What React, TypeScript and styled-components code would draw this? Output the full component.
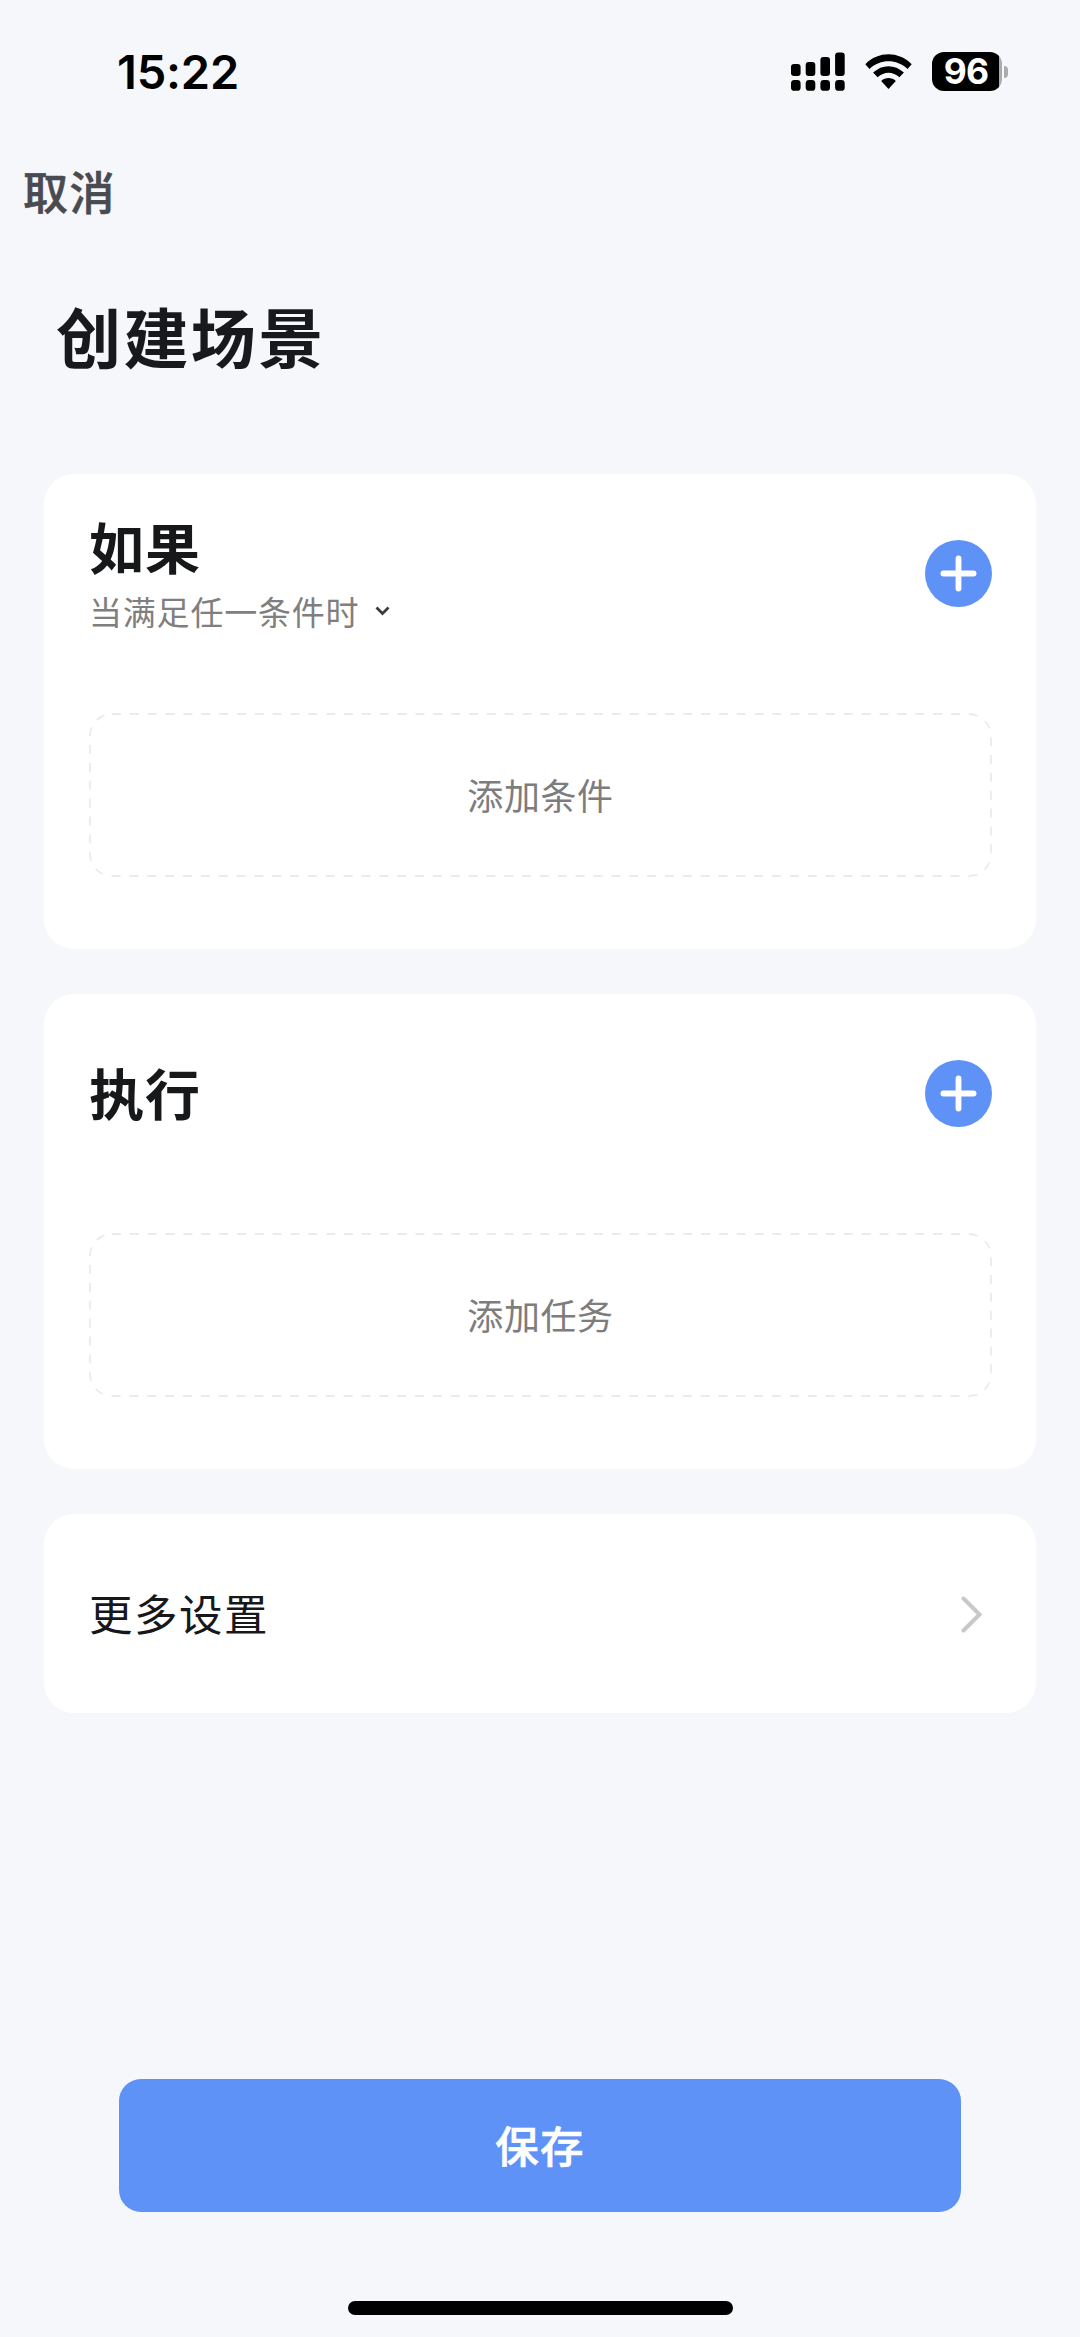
import React from "react";
import styled, { createGlobalStyle } from "styled-components";

const GlobalStyle = createGlobalStyle`
  * { box-sizing: border-box; }
  body {
    margin: 0;
    background: #f5f7fb;
    font-family: "Noto Sans CJK SC", "PingFang SC", sans-serif;
  }
  button { border: 0; padding: 0; background: none; font-family: inherit; }
  svg { display: block; }
`;

const Screen = styled.div`
  width: 1080px;
  height: 2337px;
  display: flex;
  flex-direction: column;
  background: #f5f7fb;
  overflow: hidden;
`;

const StatusBar = styled.header`
  height: 144px;
  padding: 0 72px 0 117px;
  display: flex;
  align-items: center;
  justify-content: space-between;
`;

const Clock = styled.span`
  font: 600 47px/56px Inter, sans-serif;
  letter-spacing: -0.2px;
  color: #000;
`;

const StatusIcons = styled.div`
  display: flex;
  align-items: center;
  gap: 20px;
  height: 39px;
  margin-bottom: 1px;
`;

const Battery = styled.div`
  display: flex;
  align-items: center;
  gap: 2px;
`;

const BatteryBody = styled.div`
  width: 70px;
  height: 39px;
  border-radius: 12px;
  background: linear-gradient(to right, #000 67px, #a9abaf 67px);
  color: #fff;
  font: 650 35.5px/40px Inter, sans-serif;
  letter-spacing: -0.8px;
  text-align: center;
  padding-right: 2px;
`;

const BatteryCap = styled.div`
  width: 4px;
  height: 12px;
  border-radius: 0 4px 4px 0;
  background: #a9abaf;
`;

const NavBar = styled.nav`
  height: 98px;
  padding: 0 23px 4px;
  display: flex;
  align-items: center;
`;

const CancelButton = styled.button`
  font-size: 45px;
  line-height: 60px;
  font-weight: 500;
  letter-spacing: 1.5px;
  color: #494b50;
  -webkit-text-stroke: 0.6px currentColor;
`;

const Title = styled.h1`
  margin: 0;
  height: 232px;
  padding: 48px 56px 0;
  font-size: 65px;
  line-height: 90px;
  font-weight: 700;
  letter-spacing: 2.4px;
  color: #17191d;
`;

const Cards = styled.main`
  padding: 0 44px;
  display: flex;
  flex-direction: column;
  gap: 45px;
`;

const Card = styled.section`
  height: 475px;
  padding: 0 44px 0 45px;
  border-radius: 30px;
  background: #fff;
`;

const CardHead = styled.div`
  height: 239px;
  padding-bottom: 41px;
  display: flex;
  align-items: center;
  justify-content: space-between;
`;

const CardTitle = styled.h2`
  margin: 0;
  padding-bottom: 4px;
  font-size: 55px;
  line-height: 68px;
  font-weight: 700;
  letter-spacing: 1px;
  color: #17181a;
`;

const ModePicker = styled.button`
  display: flex;
  align-items: center;
  gap: 16px;
  height: 56px;
  margin-bottom: -4px;
  font-size: 33px;
  line-height: 56px;
  letter-spacing: 0.8px;
  color: #7f7f80;
`;

const AddButton = styled.button`
  width: 67px;
  height: 67px;
  border-radius: 50%;
  background: #5f92f6;
  color: #fff;
`;

const EmptySlot = styled.button`
  position: relative;
  width: 903px;
  height: 164px;
  padding-bottom: 3px;
  display: flex;
  align-items: center;
  justify-content: center;
  font-size: 36px;
  line-height: 50px;
  letter-spacing: 0.6px;
  color: #7d7d7e;
`;

const DashedOutline = styled.svg`
  position: absolute;
  inset: 0;
`;

const SettingsRow = styled.button`
  height: 199px;
  padding: 1px 53px 0 45px;
  border-radius: 30px;
  background: #fff;
  display: flex;
  align-items: center;
  justify-content: space-between;
  font-size: 43.5px;
  line-height: 60px;
  letter-spacing: 1.5px;
  color: #17181a;
`;

const RowLabel = styled.span`
  padding-bottom: 2px;
`;

const Footer = styled.footer`
  margin-top: auto;
  display: flex;
  flex-direction: column;
  align-items: center;
  gap: 89px;
  padding-bottom: 22px;
`;

const SaveButton = styled.button`
  width: 842px;
  height: 133px;
  padding-bottom: 2px;
  border-radius: 22px;
  background: #5f92f6;
  color: #fff;
  font-size: 43.5px;
  line-height: 60px;
  font-weight: 500;
  letter-spacing: 1.2px;
  -webkit-text-stroke: 0.6px currentColor;
`;

const HomeIndicator = styled.div`
  width: 385px;
  height: 14px;
  border-radius: 7px;
  background: #000;
`;

const signalTops = [64, 62, 57, 52.5];

const Signal = () => (
  <svg width="54" height="39" viewBox="790 52 54 39">
    {signalTops.map((top, i) => (
      <React.Fragment key={top}>
        <rect x={790 + i * 14.7} y={top} width="9.6" height={76 - top} rx="3" />
        <rect x={790 + i * 14.7} y="80" width="9.6" height="10.8" rx="3.4" />
      </React.Fragment>
    ))}
  </svg>
);

const Wifi = () => (
  <svg width="47" height="36" viewBox="864 54 47 36">
    <path d="M864.3 64.2C877.5 51 897.5 51 910.7 64.2L906.5 68.9C895.5 58.7 879.5 58.7 868.5 68.9Z" />
    <path d="M872.1 72.6C881 64 894 64 902.9 72.6L898.4 77.3C891.8 71.2 883.2 71.2 876.6 77.3Z" />
    <path d="M880.2 80.9C884.5 77.1 890.5 77.1 894.8 80.9L887.5 89Z" />
  </svg>
);

const Plus = () => (
  <svg width="67" height="67" viewBox="0 0 67 67" stroke="currentColor" strokeWidth="5.8" strokeLinecap="round">
    <path d="M18.4 33.5H48.6M33.5 18.4V48.6" />
  </svg>
);

const Section = ({ title, mode, hint }: { title: string; mode?: string; hint: string }) => (
  <Card>
    <CardHead>
      <div>
        <CardTitle>{title}</CardTitle>
        {mode && (
          <ModePicker>
            {mode}
            <svg width="15" height="10" viewBox="0 0 15 10" fill="none" stroke="#3b3b3d" strokeWidth="2.7">
              <path d="M1.5 1.5L7.5 7.5L13.5 1.5" />
            </svg>
          </ModePicker>
        )}
      </div>
      <AddButton aria-label={hint}>
        <Plus />
      </AddButton>
    </CardHead>
    <EmptySlot>
      <DashedOutline width="903" height="164" fill="none" stroke="#ebebec" strokeWidth="1.8" strokeDasharray="9 8.85">
        <rect x="1" y="1" width="901" height="162" rx="22" />
      </DashedOutline>
      {hint}
    </EmptySlot>
  </Card>
);

export default function App() {
  return (
    <Screen>
      <GlobalStyle />
      <StatusBar>
        <Clock>15:22</Clock>
        <StatusIcons>
          <Signal />
          <Wifi />
          <Battery>
            <BatteryBody>96</BatteryBody>
            <BatteryCap />
          </Battery>
        </StatusIcons>
      </StatusBar>
      <NavBar>
        <CancelButton>取消</CancelButton>
      </NavBar>
      <Title>创建场景</Title>
      <Cards>
        <Section title="如果" mode="当满足任一条件时" hint="添加条件" />
        <Section title="执行" hint="添加任务" />
        <SettingsRow>
          <RowLabel>更多设置</RowLabel>
          <svg width="22" height="37" viewBox="0 0 22 37" fill="none" stroke="#c8c8c8" strokeWidth="4" strokeLinecap="round">
            <path d="M2.5 2.5L18.5 18.5L2.5 34.5" />
          </svg>
        </SettingsRow>
      </Cards>
      <Footer>
        <SaveButton>保存</SaveButton>
        <HomeIndicator />
      </Footer>
    </Screen>
  );
}
